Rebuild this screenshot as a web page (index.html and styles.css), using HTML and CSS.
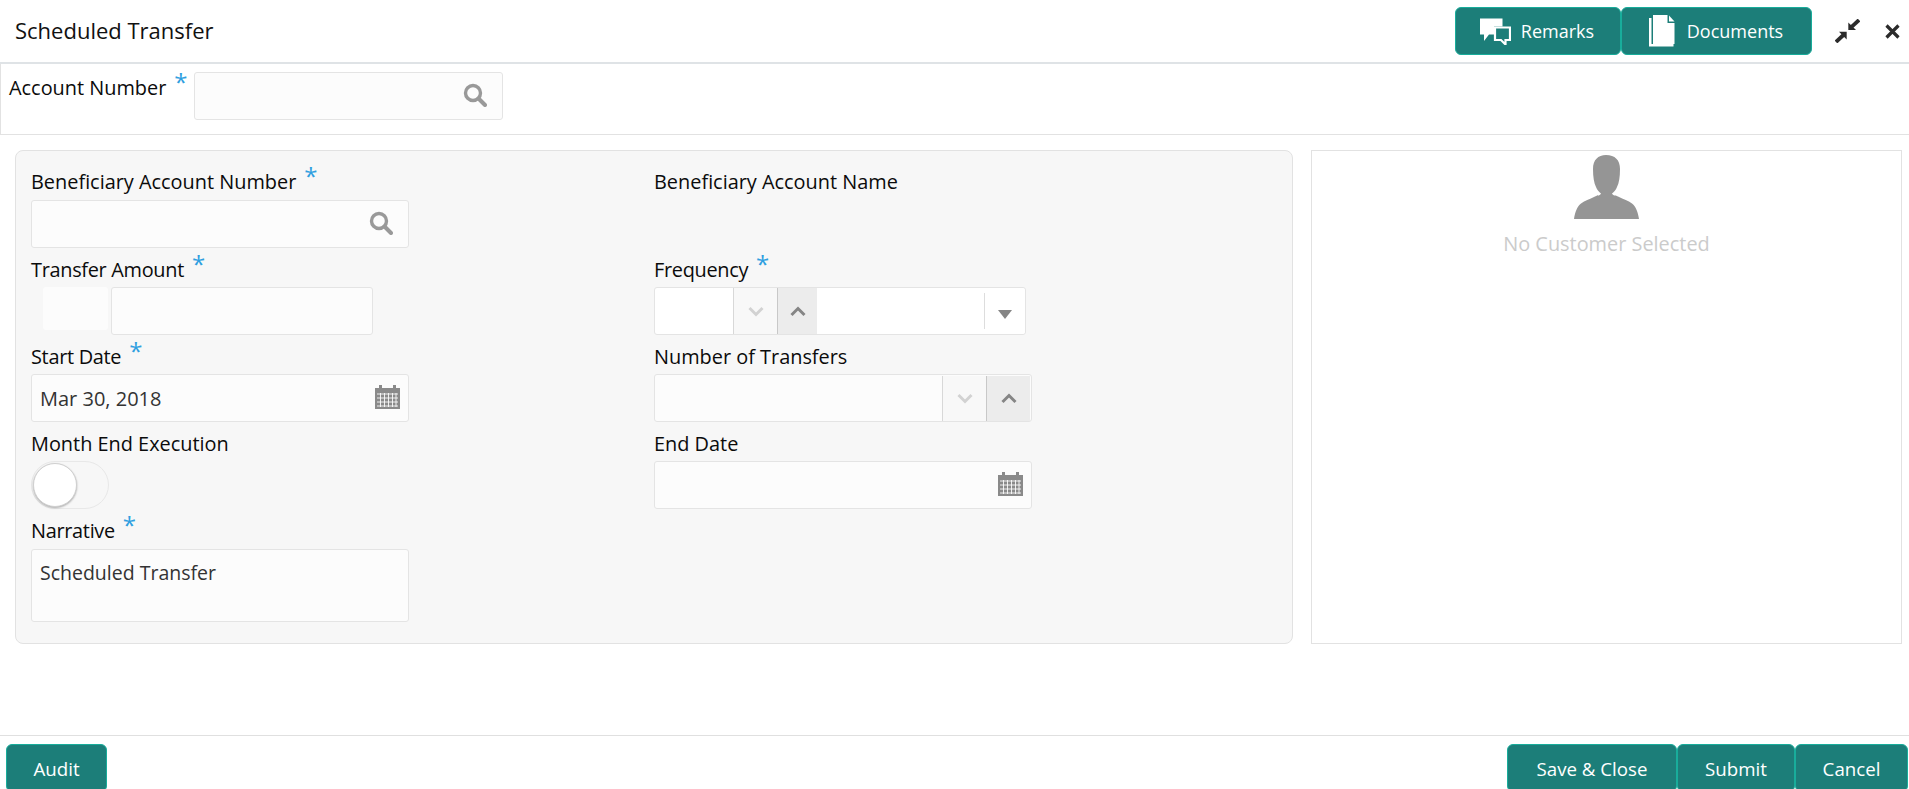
FILE: index.html
```html
<!DOCTYPE html>
<html lang="en">
<head>
<meta charset="utf-8">
<title>Scheduled Transfer</title>
<link rel="stylesheet" href="styles.css">
</head>
<body>
<svg class="defs" width="0" height="0" aria-hidden="true">
  <symbol id="i-search" viewBox="0 0 24 24"><circle cx="10" cy="10" r="7.500" fill="none" stroke="#999" stroke-width="3.400"/><path d="M15.500 15.500L22 22" fill="none" stroke="#999" stroke-width="4" stroke-linecap="round"/></symbol>
  <symbol id="i-cal" viewBox="0 0 25 24"><path d="M0 3h4V0h3v3h11V0h3v3h4v21H0z" fill="#8a8a8a"/><path d="M2 9h21M2 13h21M2 17h21M2 21h21M5.500 8v14M9.500 8v14M13.500 8v14M17.500 8v14M21 8v14" stroke="#fff" stroke-width="1" opacity=".85" fill="none"/></symbol>
  <symbol id="i-chev" viewBox="0 0 16 11"><path d="M1.500 2L8 8.500 14.500 2" fill="none" stroke="currentColor" stroke-width="3"/></symbol>
</svg>

<header class="topbar">
  <h1 class="title">Scheduled Transfer</h1>
  <div class="top-actions">
    <button class="btn btn-remarks" type="button">
      <svg class="ic-remarks" viewBox="0 0 32 27" aria-hidden="true"><path d="M1 .5h22.500v8H15v8h-5l-5 6.500v-6.500H1z" fill="#fff"/><path d="M16 9.500h15V22h-4.500v4.500L22 22h-6z" fill="none" stroke="#fff" stroke-width="2.200"/></svg>
      <span>Remarks</span>
    </button>
    <button class="btn btn-docs" type="button">
      <svg class="ic-docs" viewBox="0 0 26 32" aria-hidden="true"><path d="M0 3h2.500v26h22v2.500H0z" fill="#fff"/><path d="M4 0h14.500v8h7v21H4z" fill="#fff"/><path d="M20 .5l5.500 6H20z" fill="#fff"/></svg>
      <span>Documents</span>
    </button>
    <svg class="ic-min" viewBox="0 0 25 24" aria-hidden="true"><path d="M13.300 3.500V11H21z" fill="#2b2b2b"/><path d="M15.500 8.800L24 1" fill="none" stroke="#2b2b2b" stroke-width="3.800"/><path d="M4 12.700h7.700v7.800z" fill="#2b2b2b"/><path d="M9.500 15L1 23" fill="none" stroke="#2b2b2b" stroke-width="3.800"/></svg>
    <svg class="ic-close" viewBox="0 0 15 15" aria-hidden="true"><path d="M1.500 1.500l12 12M13.500 1.500l-12 12" fill="none" stroke="#2b2b2b" stroke-width="3.200"/></svg>
  </div>
</header>

<section class="account-row">
  <label class="inline-label">Account Number<span class="req">*</span></label>
  <div class="input input-account"><svg class="ic-search"><use href="#i-search"/></svg></div>
</section>

<main class="content">
  <section class="form-panel">
    <div class="col">
      <div class="field">
        <label class="label">Beneficiary Account Number<span class="req">*</span></label>
        <div class="input w378"><svg class="ic-search"><use href="#i-search"/></svg></div>
      </div>
      <div class="field">
        <label class="label tight">Transfer Amount<span class="req">*</span></label>
        <div class="amount">
          <div class="ccy"></div>
          <div class="input w262"></div>
        </div>
      </div>
      <div class="field">
        <label class="label tight">Start Date<span class="req">*</span></label>
        <div class="input w378"><span class="value value-date">Mar 30, 2018</span><svg class="ic-cal"><use href="#i-cal"/></svg></div>
      </div>
      <div class="field">
        <label class="label">Month End Execution</label>
        <div class="switch"><span class="knob"></span></div>
      </div>
      <div class="field field-last">
        <label class="label tight">Narrative<span class="req">*</span></label>
        <div class="input w378 textarea"><span class="value">Scheduled Transfer</span></div>
      </div>
    </div>
    <div class="col">
      <div class="field">
        <label class="label">Beneficiary Account Name</label>
      </div>
      <div class="field">
        <label class="label tight">Frequency<span class="req">*</span></label>
        <div class="input freq">
          <div class="freq-num"></div>
          <div class="spin spin-down"><svg class="ic-chev"><use href="#i-chev"/></svg></div>
          <div class="spin spin-up"><svg class="ic-chev flip"><use href="#i-chev"/></svg></div>
          <div class="freq-select"><span class="tri"></span></div>
        </div>
      </div>
      <div class="field">
        <label class="label">Number of Transfers</label>
        <div class="input w378 number">
          <div class="spin spin-down"><svg class="ic-chev"><use href="#i-chev"/></svg></div>
          <div class="spin spin-up"><svg class="ic-chev flip"><use href="#i-chev"/></svg></div>
        </div>
      </div>
      <div class="field">
        <label class="label">End Date</label>
        <div class="input w378"><svg class="ic-cal"><use href="#i-cal"/></svg></div>
      </div>
    </div>
  </section>

  <aside class="customer">
    <svg class="ic-person" viewBox="0 0 65 64" aria-hidden="true"><path d="M32 0c9 0 14 5 14 14 0 8-1 14-3 18-1 3-3 5-5 6.500 2 3 2.500 1 6 3 6 3 10 4 14 7 4 3 6 9 7 15.500H0c1-6.500 3-12.500 7-15.500 4-3 8-4 14-7 3.500-2 4 0 6-3-2-1.500-4-3.500-5-6.500-2-4-3-10-3-18C19 5 24 0 32 0z" fill="#959595"/></svg>
    <p class="no-customer">No Customer Selected</p>
  </aside>
</main>

<footer class="footer">
  <button class="btn btn-audit" type="button">Audit</button>
  <div class="footer-right">
    <button class="btn btn-save" type="button">Save &amp; Close</button>
    <button class="btn btn-submit" type="button">Submit</button>
    <button class="btn btn-cancel" type="button">Cancel</button>
  </div>
</footer>
</body>
</html>
```

FILE: styles.css
```css
* { box-sizing: border-box; }
html, body { margin: 0; padding: 0; }
body {
  width: 1909px;
  height: 789px;
  overflow: hidden;
  background: #fff;
  color: #0b0b0b;
  font-family: "Open Sans", "Noto Sans", sans-serif;
  font-size: 19.9px;
  display: flex;
  flex-direction: column;
}
.defs { position: absolute; }

.topbar {
  height: 64px;
  flex: none;
  border-bottom: 2px solid #dfe3e6;
  display: flex;
  align-items: flex-start;
  justify-content: space-between;
  padding: 7px 9px 0 15px;
}
.title { margin: 0; font-size: 22px; font-weight: 400; line-height: 47px; color: #111; }
.top-actions { display: flex; align-items: flex-start; }

.btn {
  border: 1px solid #18ad9b;
  border-radius: 6px;
  background: #1c7e79;
  color: #fff;
  font-family: inherit;
  font-size: 18px;
  height: 48px;
  padding: 0;
  display: flex;
  align-items: center;
  justify-content: center;
  flex: none;
}
.btn-remarks { width: 166px; gap: 10px; padding-right: 3px; }
.btn-docs { width: 191px; gap: 12px; padding-right: 1px; }
.ic-remarks { width: 32px; height: 27px; }
.ic-docs { width: 26px; height: 32px; }
.ic-min { width: 25px; height: 24px; margin: 12px 0 0 23px; }
.ic-close { width: 15px; height: 15px; margin: 17px 0 0 25px; }

.account-row {
  height: 71px;
  flex: none;
  border: 1px solid #e2e2e2;
  border-top: 0;
  border-right: 0;
  display: flex;
  align-items: flex-start;
  padding: 8px 0 0 8px;
}
.inline-label { width: 185px; line-height: 24px; flex: none; white-space: nowrap; margin-top: -2px; }

.req {
  color: #2f9fe0;
  font-size: 24px;
  line-height: 1;
  margin-left: 8px;
  vertical-align: 4px;
  display: inline-block;
  height: 18px;
  letter-spacing: 0;
}

.input {
  position: relative;
  height: 48px;
  background: #fcfcfc;
  border: 1px solid #e4e4e4;
  border-radius: 3px;
  display: flex;
  align-items: center;
}
.input-account { width: 309px; }
.w378 { width: 378px; }
.w262 { width: 262px; }

.ic-search { position: absolute; right: 15px; top: 10px; width: 24px; height: 24px; }
.ic-cal { position: absolute; right: 8px; top: 10px; width: 25px; height: 24px; }
.value { padding-left: 8px; color: #333; font-size: 19.5px; }
.value-date { font-size: 20px; }

.content {
  flex: none;
  display: flex;
  gap: 18px;
  padding: 15px 7px 0 15px;
  height: 509px;
}
.form-panel {
  width: 1278px;
  height: 494px;
  background: #f7f7f7;
  border: 1px solid #e2e2e2;
  border-radius: 8px;
  padding: 10px 15px 0;
  display: grid;
  grid-template-columns: 623px 1fr;
}
.field { min-height: 87px; }
.field-last { margin-top: 1px; }
.label { display: block; height: 39px; line-height: 41px; white-space: nowrap; }
.field + .field .label { line-height: 43px; }
.field-last.field .label { line-height: 41px; }
.tight { letter-spacing: -.3px; }

.amount { display: flex; align-items: flex-start; gap: 3px; padding-left: 12px; }
.ccy { width: 65px; height: 43px; background: #fcfcfc; border-radius: 3px; }

.switch {
  width: 78px;
  height: 48px;
  border: 1px solid #e8e8e8;
  border-radius: 24px;
  padding: 1px;
}
.knob {
  display: block;
  width: 44px;
  height: 44px;
  border-radius: 50%;
  background: #fff;
  border: 1px solid #d0d0d0;
  box-shadow: 0 1px 2px rgba(0,0,0,.3);
}
.textarea { height: 73px; align-items: flex-start; padding-top: 9px; }

.freq { width: 372px; background: #fff; align-items: stretch; }
.freq-num { width: 78px; }
.spin {
  width: 44px;
  display: flex;
  align-items: center;
  justify-content: center;
  border-left: 1px solid #d8d8d8;
}
.spin-down { background: #f8f8f8; color: #d2d2d2; }
.spin-up { background: #ececec; color: #858585; border-left-color: #c8c8c8; }
.freq .spin-up { width: 40px; }
.freq-select { flex: 1; position: relative; background: #fff; border-radius: 3px; }
.freq-select::before {
  content: "";
  position: absolute;
  left: 167px;
  top: 5px;
  bottom: 5px;
  border-left: 1px solid #ddd;
}
.tri {
  position: absolute;
  left: 181px;
  top: 22px;
  border-left: 7px solid transparent;
  border-right: 7px solid transparent;
  border-top: 9px solid #858585;
}
.ic-chev { width: 16px; height: 11px; }
.flip { transform: rotate(180deg); }
.number { justify-content: flex-end; align-items: stretch; padding: 1px 1px 0 0; background: #fcfcfc; }

.customer {
  width: 591px;
  height: 494px;
  border: 1px solid #e2e2e2;
  display: flex;
  flex-direction: column;
  align-items: center;
  padding-top: 4px;
}
.ic-person { width: 65px; height: 64px; margin-left: -1px; }
.no-customer { margin: 12px 0 0; color: #cbcbcb; line-height: 26px; }

.footer {
  flex: 1;
  margin-top: 91px;
  border-top: 1px solid #e0e0e0;
  display: flex;
  justify-content: space-between;
  align-items: flex-start;
  padding: 8px 1px 0 6px;
  min-height: 0;
}
.footer-right { display: flex; }
.btn-audit { width: 101px; }
.btn-save { width: 170px; }
.btn-submit { width: 118px; }
.btn-cancel { width: 113px; }
.footer .btn { font-size: 18.7px; }
```
